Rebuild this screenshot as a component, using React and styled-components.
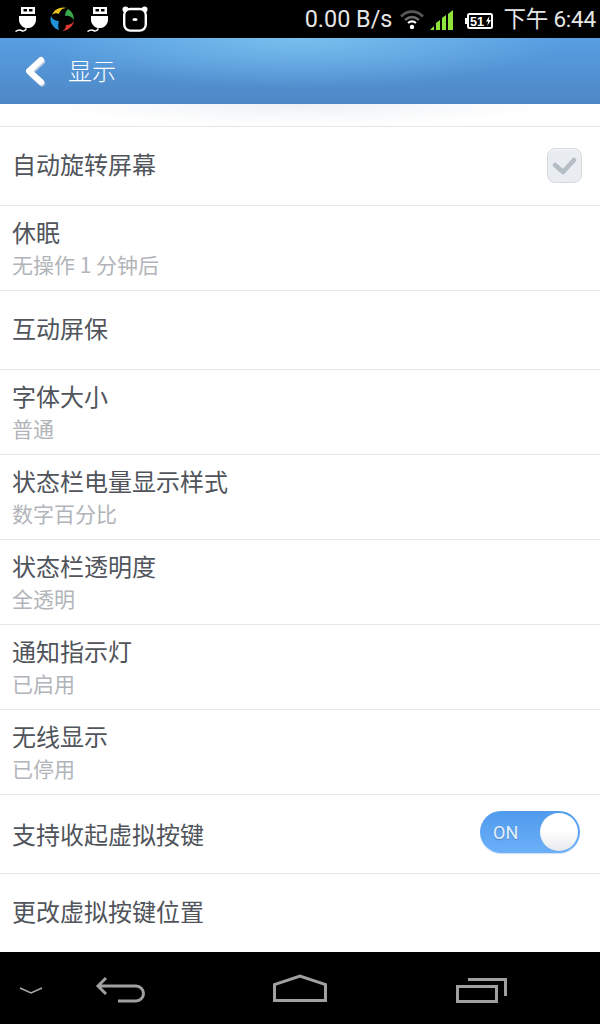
import React from 'react';
import styled, { createGlobalStyle } from 'styled-components';

const GlobalStyle = createGlobalStyle`
  html, body {
    margin: 0;
    padding: 0;
    background: #fff;
  }
  body {
    font-family: "Roboto", "Noto Sans CJK SC", sans-serif;
  }
`;

const Screen = styled.div`
  width: 600px;
  height: 1024px;
  display: flex;
  flex-direction: column;
  overflow: hidden;
  background: #fff;
`;

const StatusBar = styled.div`
  height: 38px;
  flex: none;
  background: #000;
  display: flex;
  align-items: center;
  justify-content: space-between;
  padding: 0 4px 0 15px;
`;

const StatusGroup = styled.div`
  display: flex;
  align-items: center;
  gap: ${(p) => p.$gap || 0}px;
  margin-left: ${(p) => p.$left || 0}px;
`;

const StatusText = styled.span`
  color: #e6e6e6;
  font-size: ${(p) => p.$size || 23.4}px;
  letter-spacing: ${(p) => p.$spacing || 0}px;
  line-height: 38px;
  white-space: nowrap;
  font-family: "Roboto", "Noto Sans CJK SC", sans-serif;
  margin-left: ${(p) => p.$left || 0}px;
`;

const Header = styled.div`
  height: 66px;
  flex: none;
  display: flex;
  align-items: center;
  padding-left: 24px;
  gap: 22px;
  background:
    radial-gradient(ellipse 260px 50px at 300px 0, rgba(124, 194, 238, 0.9), rgba(124, 194, 238, 0)),
    linear-gradient(#589fe2, #4e87c5);
`;

const BackIcon = styled.svg`
  width: 22px;
  height: 34px;
  flex: none;
`;

const HeaderTitle = styled.span`
  color: #fff;
  font-size: 24px;
  font-weight: 300;
  margin-bottom: 4px;
`;

const Fade = styled.div`
  height: 22px;
  flex: none;
  background:
    radial-gradient(ellipse 250px 22px at 300px 0, rgba(236, 239, 243, 0.9), rgba(255, 255, 255, 0));
`;

const List = styled.div`
  flex: 1;
  display: flex;
  flex-direction: column;
  border-top: 1px solid #e3e8ec;
`;

const Row = styled.div`
  box-sizing: border-box;
  height: ${(p) => (p.$tall ? 85 : p.$last ? 78 : 79)}px;
  flex: none;
  display: flex;
  align-items: center;
  justify-content: space-between;
  padding: 0 20px ${(p) => (p.$flush ? 0 : p.$tall ? 1 : 4)}px 12px;
  border-bottom: ${(p) => (p.$last ? 'none' : '1px solid #e3e8ec')};
`;

const RowText = styled.div`
  display: flex;
  flex-direction: column;
  gap: 3px;
  font-family: "Noto Sans CJK SC", sans-serif;
`;

const Title = styled.div`
  font-size: 24px;
  line-height: 30px;
  color: #50545b;
`;

const Sub = styled.div`
  font-size: 21px;
  line-height: 29px;
  color: #b1b4b9;
`;

const Check = styled.div`
  width: 35px;
  height: 35px;
  box-sizing: border-box;
  margin: 2px -2px 0 0;
  display: flex;
  align-items: center;
  justify-content: center;
  border-radius: 8px;
  border: 1px solid #d5d9de;
  background: #e9ecf0;
  box-shadow: inset 0 1px 1px #f7f8fa;
`;

const Toggle = styled.div`
  box-sizing: border-box;
  width: 100px;
  height: 42px;
  margin-bottom: 4px;
  display: flex;
  align-items: center;
  justify-content: space-between;
  padding: 2px 2px 2px 13px;
  border-radius: 21px;
  background: linear-gradient(#4f9bec, #6cb0f8);
  box-shadow: 0 1px 1px rgba(120, 170, 230, 0.35);
`;

const ToggleLabel = styled.span`
  color: #e4f0fc;
  font-size: 18px;
  font-family: "Roboto", sans-serif;
  text-shadow: 0 1px 1px rgba(60, 100, 160, 0.6);
`;

const Knob = styled.div`
  width: 38px;
  height: 38px;
  border-radius: 50%;
  background: linear-gradient(#fff 45%, #e8e9ec);
`;

const NavBar = styled.div`
  height: 72px;
  flex: none;
  background: #000;
  display: flex;
  align-items: center;
  padding-left: 19px;
`;

const NavIcon = styled.svg`
  flex: none;
  height: 40px;
  margin-left: ${(p) => p.$left || 0}px;
`;

const NavLine = styled.path`
  fill: none;
  stroke: #a0a0a0;
  stroke-width: 3;
`;

const BatteryLabel = styled.text`
  fill: #fff;
  font-family: "Liberation Sans", sans-serif;
  font-size: 13px;
  font-weight: 700;
`;

const UsbIcon = () => (
  <svg width="22" height="26" viewBox="0 0 22 26">
    <rect x="6" y="1" width="14" height="7" fill="#fff" />
    <rect x="8.500" y="3" width="3.500" height="2.500" fill="#000" />
    <rect x="14" y="3" width="3.500" height="2.500" fill="#000" />
    <path d="M4 10h17v4c0 4-4 8-7 8h-3c-3 0-7-4-7-8z" fill="#fff" />
    <path d="M0.500 25.500c3-2 4-2 6-1s3 1 5-2" fill="none" stroke="#fff" strokeWidth="1.500" />
  </svg>
);

const AppIcon = () => (
  <svg width="24" height="24" viewBox="0 0 24 24">
    <path d="M2 8C4 2 11-1 17 1c-4 0-7 2-8 6-2-1-5-1-7 1z" fill="#e8c21a" />
    <path d="M18 2c4 2 6 7 6 11-2-3-5-5-9-4 0-3 1-5 3-7z" fill="#3aa84a" />
    <path d="M24 14c-1 6-7 10-12 10 3-1 4-4 4-6 3 0 6-1 8-4z" fill="#e23a32" />
    <path d="M9 23C3 21-1 15 1 9c1 3 5 5 8 5-1 3-1 6 0 9z" fill="#1f94d8" />
  </svg>
);

const AlarmIcon = () => (
  <svg width="26" height="26" viewBox="0 0 26 26">
    <circle cx="3.500" cy="3.500" r="3" fill="#fff" />
    <circle cx="22.500" cy="3.500" r="3" fill="#fff" />
    <rect x="2.200" y="3" width="21.600" height="21.600" rx="6" fill="#000" stroke="#fff" strokeWidth="2.400" />
    <ellipse cx="13" cy="13.500" rx="2.600" ry="1.600" fill="#fff" />
  </svg>
);

const WifiIcon = () => (
  <svg width="24" height="20" viewBox="0 0 24 20">
    <path d="M1 7.500C7.500 1 16.500 1 23 7.500" fill="none" stroke="#585858" strokeWidth="2.600" />
    <path d="M5 11c4.500-4 9.500-4 14 0" fill="none" stroke="#6a6a6a" strokeWidth="2.400" />
    <path d="M8 14c2.500-2 5.500-2 8 0" fill="none" stroke="#fff" strokeWidth="2.200" />
    <circle cx="12" cy="18" r="2.200" fill="#fff" />
  </svg>
);

const SignalIcon = () => (
  <svg width="29" height="22" viewBox="0 0 29 22">
    <path d="M0 22l4-4v4zM6 22v-7l4-3v10zM12 22V10l4-3v15zM18 22V6l5-4v20z" fill="#8fe33b" />
  </svg>
);

const BatteryIcon = () => (
  <svg width="28" height="22" viewBox="0 0 28 22">
    <rect x="0" y="10" width="2" height="6" fill="#fff" />
    <rect x="3" y="6" width="24" height="14" rx="1.500" fill="none" stroke="#fff" strokeWidth="2" />
    <BatteryLabel x="5" y="17.500" textLength="14" lengthAdjust="spacingAndGlyphs">51</BatteryLabel>
    <path d="M24.500 8l-3.500 5.500h2.200l-1 4.500 3.800-6h-2.200z" fill="#fff" />
  </svg>
);

const rows = [
  { title: '自动旋转屏幕', control: 'check' },
  { title: '休眠', sub: '无操作 1 分钟后' },
  { title: '互动屏保' },
  { title: '字体大小', sub: '普通' },
  { title: '状态栏电量显示样式', sub: '数字百分比' },
  { title: '状态栏透明度', sub: '全透明' },
  { title: '通知指示灯', sub: '已启用' },
  { title: '无线显示', sub: '已停用' },
  { title: '支持收起虚拟按键', control: 'toggle' },
  { title: '更改虚拟按键位置' },
];

export default function App() {
  return (
    <>
      <GlobalStyle />
      <Screen>
        <StatusBar>
          <StatusGroup $gap={13}>
            <UsbIcon />
            <AppIcon />
            <UsbIcon />
            <AlarmIcon />
          </StatusGroup>
          <StatusGroup>
            <StatusText>0.00 B/s</StatusText>
            <StatusGroup $gap={6} $left={8}>
              <WifiIcon />
              <SignalIcon />
              <BatteryIcon />
            </StatusGroup>
            <StatusText $left={10} $size={22.5} $spacing={-0.2}>下午 6:44</StatusText>
          </StatusGroup>
        </StatusBar>

        <Header>
          <BackIcon viewBox="0 0 22 34">
            <path d="M17 6L5 17l12 11" fill="none" stroke="#b9cbe0" strokeWidth="6" strokeLinecap="round" strokeLinejoin="round" transform="translate(1 1.500)" />
            <path d="M17 6L5 17l12 11" fill="none" stroke="#fff" strokeWidth="6" strokeLinecap="round" strokeLinejoin="round" />
          </BackIcon>
          <HeaderTitle>显示</HeaderTitle>
        </Header>
        <Fade />

        <List>
          {rows.map((row, i) => (
            <Row
              key={row.title}
              $tall={!!row.sub}
              $last={i === rows.length - 1}
              $flush={row.control === 'toggle'}
            >
              <RowText>
                <Title>{row.title}</Title>
                {row.sub && <Sub>{row.sub}</Sub>}
              </RowText>
              {row.control === 'check' && (
                <Check>
                  <svg width="33" height="33" viewBox="0 0 33 33">
                    <path d="M7 16l8 7 11-12" fill="none" stroke="#b4bcc4" strokeWidth="4.500" strokeLinecap="round" strokeLinejoin="round" />
                  </svg>
                </Check>
              )}
              {row.control === 'toggle' && (
                <Toggle>
                  <ToggleLabel>ON</ToggleLabel>
                  <Knob />
                </Toggle>
              )}
            </Row>
          ))}
        </List>

        <NavBar>
          <NavIcon width="24" viewBox="0 0 24 40">
            <path d="M1 20l11 5 11-5" fill="none" stroke="#aaa" strokeWidth="1.500" />
          </NavIcon>
          <NavIcon width="51" viewBox="0 0 51 40" $left={52}>
            <NavLine d="M11 10L3 18l8 8M3 18h38a7.500 7.500 0 0 1 0 15H23" />
          </NavIcon>
          <NavIcon width="55" viewBox="0 0 55 40" $left={127}>
            <NavLine d="M1.500 32.500V16.500L27 8l25.500 8.500v16z" />
          </NavIcon>
          <NavIcon width="52" viewBox="0 0 52 40" $left={128}>
            <NavLine d="M1.500 18.500h39v15h-39zM12 11.500h37.500V28" />
          </NavIcon>
        </NavBar>
      </Screen>
    </>
  );
}
